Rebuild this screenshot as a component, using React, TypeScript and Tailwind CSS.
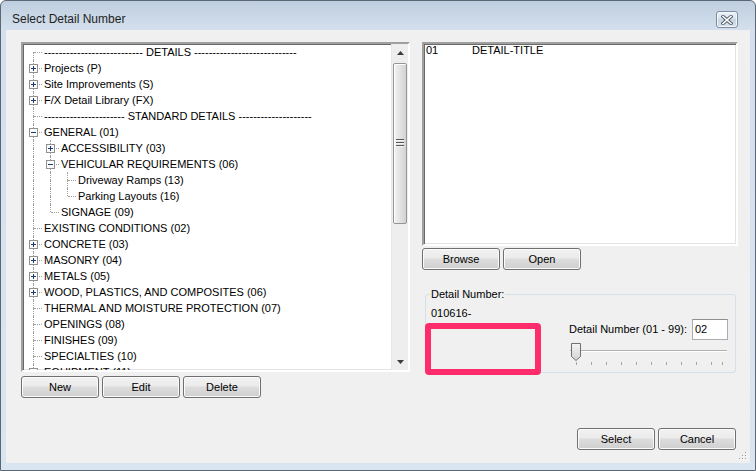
import clsx from 'clsx'

type TreeNode = {
  label: string
  box?: 'plus' | 'minus'
  children?: TreeNode[]
}

type FlatRow = {
  label: string
  box?: 'plus' | 'minus'
  level: number
  ancestors: boolean[]
  hasNext: boolean
  first: boolean
}

const tree: TreeNode[] = [
  { label: `${'-'.repeat(27)} DETAILS ${'-'.repeat(28)}` },
  { label: 'Projects (P)', box: 'plus' },
  { label: 'Site Improvements (S)', box: 'plus' },
  { label: 'F/X Detail Library (FX)', box: 'plus' },
  { label: `${'-'.repeat(22)} STANDARD DETAILS ${'-'.repeat(20)}` },
  {
    label: 'GENERAL (01)',
    box: 'minus',
    children: [
      { label: 'ACCESSIBILITY (03)', box: 'plus' },
      {
        label: 'VEHICULAR REQUIREMENTS (06)',
        box: 'minus',
        children: [
          { label: 'Driveway Ramps (13)' },
          { label: 'Parking Layouts (16)' },
        ],
      },
      { label: 'SIGNAGE (09)' },
    ],
  },
  { label: 'EXISTING CONDITIONS (02)' },
  { label: 'CONCRETE (03)', box: 'plus' },
  { label: 'MASONRY (04)', box: 'plus' },
  { label: 'METALS (05)', box: 'plus' },
  { label: 'WOOD, PLASTICS, AND COMPOSITES (06)', box: 'plus' },
  { label: 'THERMAL AND MOISTURE PROTECTION (07)' },
  { label: 'OPENINGS (08)' },
  { label: 'FINISHES (09)' },
  { label: 'SPECIALTIES (10)' },
  { label: 'EQUIPMENT (11)', box: 'plus' },
  { label: 'FURNISHINGS (12)', box: 'plus' },
]

function flatten(
  nodes: TreeNode[],
  level: number,
  ancestors: boolean[],
  out: FlatRow[],
) {
  nodes.forEach((n, i) => {
    const hasNext = i < nodes.length - 1
    out.push({
      label: n.label,
      box: n.box,
      level,
      ancestors,
      hasNext,
      first: level === 0 && i === 0,
    })
    if (n.children) flatten(n.children, level + 1, [...ancestors, hasNext], out)
  })
  return out
}

const rows = flatten(tree, 0, [], [])

const dotted = 'absolute border-dotted border-[#a0a0a0]'

function ExpandBox({ kind }: { kind: 'plus' | 'minus' }) {
  return (
    <svg
      className="absolute left-1 top-1"
      width="9"
      height="9"
      viewBox="0 0 9 9"
    >
      <rect x="0.5" y="0.5" width="8" height="8" fill="#fbfbfb" stroke="#919191" />
      <path d="M2 4.5h5" stroke="#1e3a6e" />
      {kind === 'plus' && <path d="M4.5 2v5" stroke="#1e3a6e" />}
    </svg>
  )
}

function Cell({
  top,
  bottom,
  horiz,
  box,
}: {
  top?: boolean
  bottom?: boolean
  horiz?: boolean
  box?: 'plus' | 'minus'
}) {
  return (
    <div className="relative h-4 w-[17px] shrink-0">
      {top && <span className={clsx(dotted, 'left-2 top-0 h-2 border-l')} />}
      {bottom && <span className={clsx(dotted, 'left-2 top-2 h-2 border-l')} />}
      {horiz && <span className={clsx(dotted, 'left-[9px] top-2 w-2 border-t')} />}
      {box && <ExpandBox kind={box} />}
    </div>
  )
}

function TreeRow({ row }: { row: FlatRow }) {
  return (
    <div className="flex h-4 items-center">
      {row.ancestors.map((cont, i) => (
        <Cell key={i} top={cont} bottom={cont} />
      ))}
      <Cell top={!row.first} bottom={row.hasNext} horiz box={row.box} />
      <span className="ml-[2px] whitespace-nowrap text-[11px] leading-4">
        {row.label}
      </span>
    </div>
  )
}

function WinButton({ label }: { label: string }) {
  return (
    <button className="h-[22px] w-[78px] shrink-0 rounded-[3px] border border-[#707070] bg-[linear-gradient(#f2f2f2,#ebebeb_45%,#dddddd_50%,#cfcfcf)] text-[11px] text-black shadow-[inset_0_0_0_1px_#fbfbfb]">
      {label}
    </button>
  )
}

function Arrow({ down }: { down?: boolean }) {
  return (
    <svg width="7" height="4" viewBox="0 0 7 4">
      <path
        d={down ? 'M0 0h7L3.5 4z' : 'M0 4h7L3.5 0z'}
        fill="#3c3c3c"
      />
    </svg>
  )
}

function ScrollBar() {
  return (
    <div className="flex w-[17px] shrink-0 flex-col border-l border-[#e6e6e6] bg-[#eeeeee]">
      <div className="flex h-[17px] items-center justify-center">
        <Arrow />
      </div>
      <div className="mx-px mt-[2px] flex h-[161px] items-center justify-center rounded-[2px] border border-[#959595] bg-[linear-gradient(90deg,#f3f3f3,#e4e4e4_45%,#d2d2d2)] shadow-[inset_1px_1px_0_#fff]">
        <svg width="8" height="9" viewBox="0 0 8 9">
          <path d="M0 .5h8M0 3.5h8M0 6.5h8" stroke="#555" />
          <path d="M0 1.5h8M0 4.5h8M0 7.5h8" stroke="#f4f4f4" />
        </svg>
      </div>
      <div className="flex-1" />
      <div className="flex h-[17px] items-center justify-center">
        <Arrow down />
      </div>
    </div>
  )
}

const sunken =
  'border-2 border-t-[#a0a0a0] border-l-[#a0a0a0] border-r-white border-b-white bg-white shadow-[inset_1px_1px_0_#696969,inset_-1px_-1px_0_#e3e3e3]'

function Slider() {
  const ticks = [7, 22, 37, 52, 67, 82, 97, 112, 127, 142, 153]
  return (
    <svg width="159" height="24" viewBox="0 0 159 24" className="mt-[3px]">
      <defs>
        <linearGradient id="thumb" x1="0" y1="0" x2="0" y2="1">
          <stop offset="0" stopColor="#f4f4f4" />
          <stop offset="1" stopColor="#d3d3d3" />
        </linearGradient>
      </defs>
      <path d="M1 7.5h157" stroke="#b1b1b1" />
      <path d="M1 8.5h157" stroke="#ffffff" />
      {ticks.map((x) => (
        <path key={x} d={`M${x + 0.5} 19v3`} stroke="#a6a6a6" />
      ))}
      <path
        d="M2.5 .5h9v13l-4.5 4-4.5-4z"
        fill="url(#thumb)"
        stroke="#707070"
      />
    </svg>
  )
}

export default function App() {
  return (
    <div className="h-[471px] w-[756px] bg-white font-['Liberation_Sans',Arial,sans-serif] text-black">
      <div className="flex h-full flex-col rounded-t-[6px] border border-[#5c6773] bg-[linear-gradient(#bfcedf,#d3dfec_28px,#dae5f2)]">
        <div className="flex h-[29px] shrink-0 items-start justify-between pl-[11px] pr-[17px] pt-[10px]">
          <span className="text-[12px] leading-[17px] text-[#1e1e1e]">
            Select Detail Number
          </span>
          <div className="flex h-[17px] w-[22px] items-center justify-center rounded-[3px] border border-[#7d8ca1] bg-[linear-gradient(#eef2f7,#d6e0eb_50%,#c7d4e2_50%,#d7e2ee)] shadow-[inset_0_0_0_1px_#f4f7fa]">
            <svg width="12" height="10" viewBox="0 0 12 10">
              <path d="M2 1.5l8 7M10 1.5l-8 7" stroke="#4a5565" strokeWidth="3.4" strokeLinecap="square" />
              <path d="M2 1.5l8 7M10 1.5l-8 7" stroke="#ffffff" strokeWidth="1.6" strokeLinecap="square" />
            </svg>
          </div>
        </div>

        <div className="relative mx-[5px] mb-[7px] flex flex-1 flex-col bg-[#f0f0f0] pl-[15px] pt-[12px]">
          <div className="flex gap-[12px]">
            <div className="flex w-[389px] flex-col">
              <div className={clsx('flex h-[330px]', sunken)}>
                <div className="flex-1 overflow-hidden pl-[2px]">
                  {rows.map((row, i) => (
                    <TreeRow key={i} row={row} />
                  ))}
                </div>
                <ScrollBar />
              </div>
              <div className="mt-[4px] flex gap-[3px]">
                <WinButton label="New" />
                <WinButton label="Edit" />
                <WinButton label="Delete" />
              </div>
            </div>

            <div className="flex w-[316px] flex-col">
              <div className={clsx('h-[204px] pl-[2px]', sunken)}>
                <div className="flex text-[11px] leading-[13px]">
                  <span className="w-[46px]">01</span>
                  <span>DETAIL-TITLE</span>
                </div>
              </div>
              <div className="mt-[2px] flex gap-[3px]">
                <WinButton label="Browse" />
                <WinButton label="Open" />
              </div>

              <div className="relative ml-[3px] mt-[24px] flex h-[79px] w-[311px] rounded-[3px] border border-[#d5dfe5] pl-[5px] pr-[7px]">
                <span className="absolute -top-[7px] left-[4px] bg-[#f0f0f0] px-px text-[11px] leading-[13px]">
                  Detail Number:
                </span>
                <div className="mt-[12px] text-[11px] leading-[13px]">010616-</div>
                <div className="ml-auto mt-[24px] flex w-[159px] flex-col">
                  <div className="flex h-[21px] items-center justify-between">
                    <span className="text-[11px] leading-[13px]">
                      Detail Number (01 - 99):
                    </span>
                    <div className="flex h-[21px] w-[36px] items-center border border-[#abadb3] border-t-[#8e8f8f] bg-white pl-[2px] text-[11px]">
                      02
                    </div>
                  </div>
                  <Slider />
                </div>
              </div>
            </div>
          </div>

          <div className="mt-auto flex justify-end gap-[3px] pb-[13px] pr-[14px]">
            <WinButton label="Select" />
            <WinButton label="Cancel" />
          </div>

          {/* annotation highlight over the detail-number preview */}
          <div className="absolute left-[419px] top-[293px] h-[52px] w-[116px] rounded-[4px] border-[6px] border-[#fe2c6b]" />

          <svg
            className="absolute bottom-[3px] right-[3px]"
            width="9"
            height="9"
            viewBox="0 0 9 9"
          >
            {[
              [7, 1],
              [4, 4],
              [7, 4],
              [1, 7],
              [4, 7],
              [7, 7],
            ].map(([x, y]) => (
              <g key={`${x}-${y}`}>
                <rect x={x + 1} y={y + 1} width="1" height="1" fill="#fff" />
                <rect x={x} y={y} width="1" height="1" fill="#9a9a9a" />
              </g>
            ))}
          </svg>
        </div>
      </div>
    </div>
  )
}
